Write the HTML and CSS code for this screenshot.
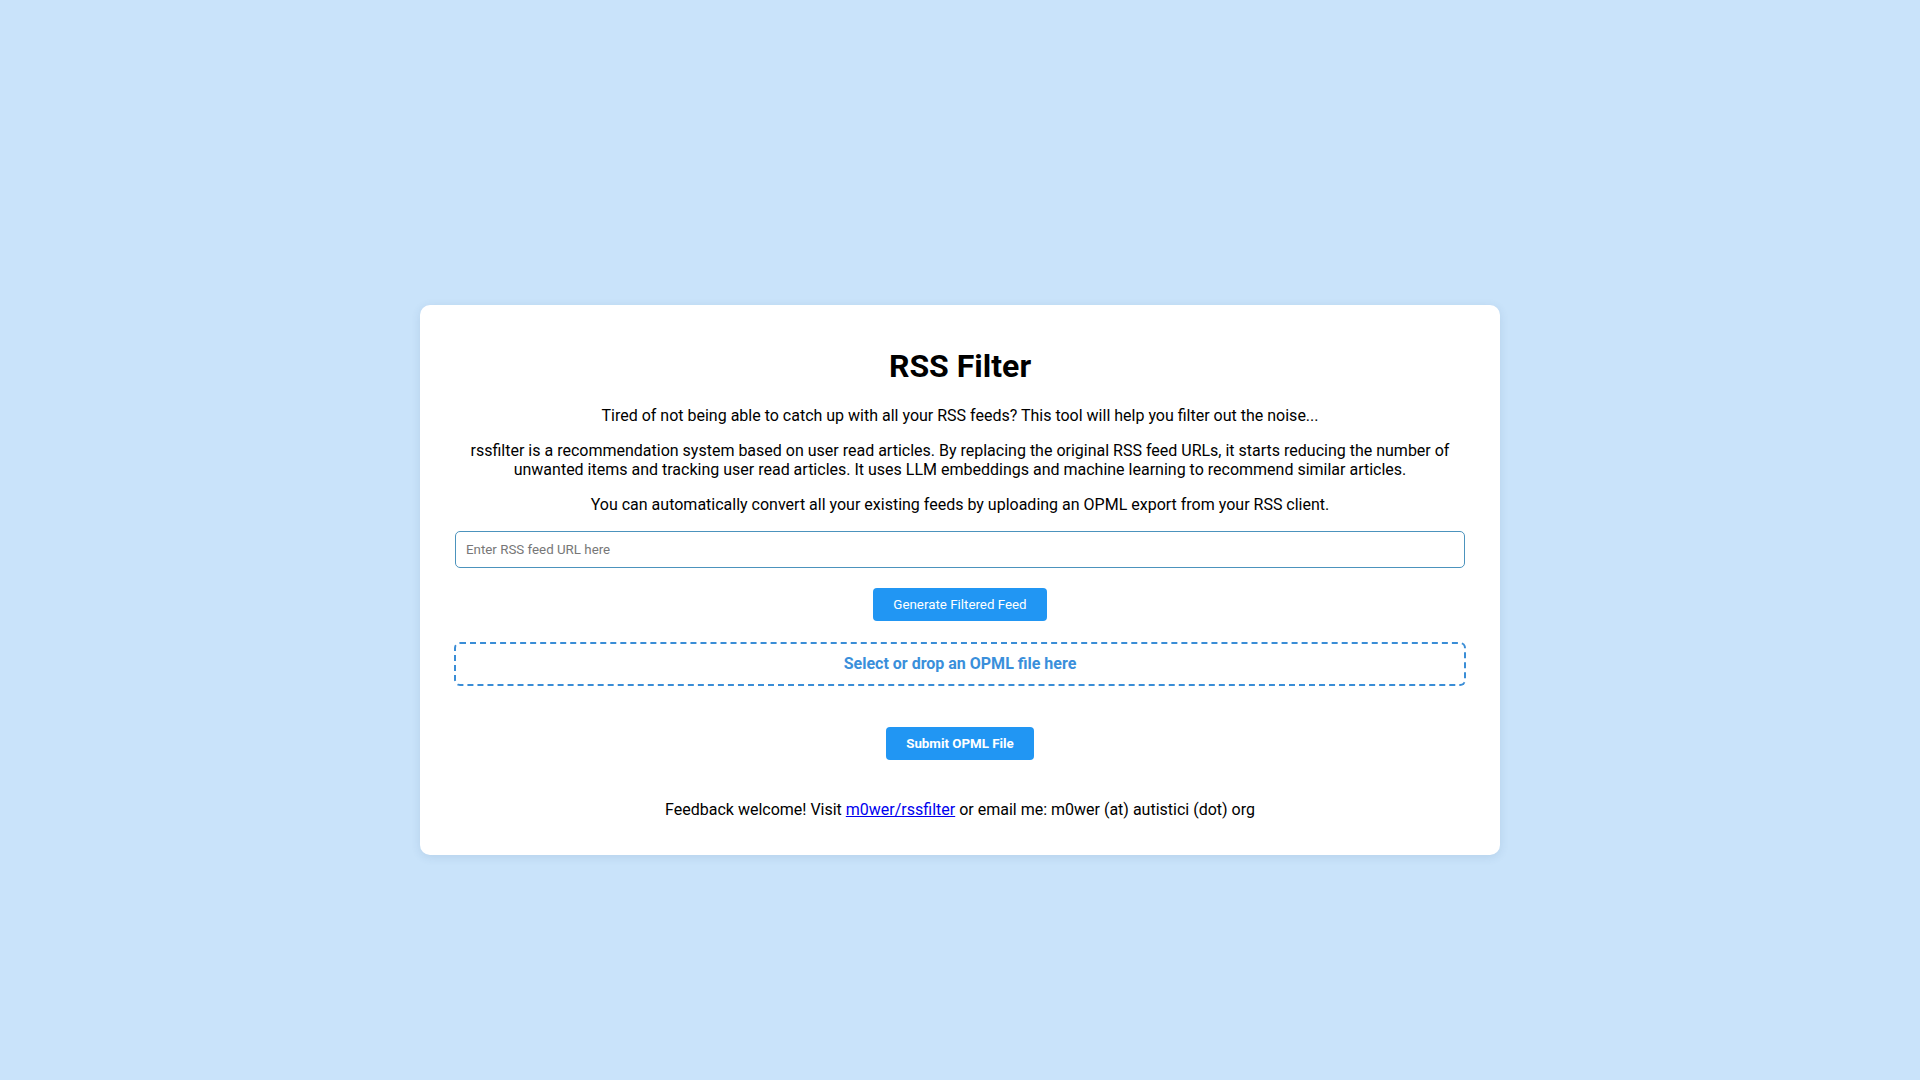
FILE: index.html
```html
<!DOCTYPE html>
<html lang="en">
<head>
<meta charset="utf-8">
<title>RSS Filter</title>
<link rel="stylesheet" href="styles.css">
</head>
<body>
<main class="card">
  <h1 class="title">RSS Filter</h1>
  <p class="text">Tired of not being able to catch up with all your RSS feeds? This tool will help you filter out the noise...</p>
  <p class="text">rssfilter is a recommendation system based on user read articles. By replacing the original RSS feed URLs, it starts reducing the number of unwanted items and tracking user read articles. It uses LLM embeddings and machine learning to recommend similar articles.</p>
  <p class="text">You can automatically convert all your existing feeds by uploading an OPML export from your RSS client.</p>
  <form class="url-form">
    <input class="url-input" type="text" placeholder="Enter RSS feed URL here">
    <button class="btn" type="button">Generate Filtered Feed</button>
  </form>
  <form class="opml-form">
    <label class="drop-zone">Select or drop an OPML file here</label>
    <button class="btn btn-bold" type="button">Submit OPML File</button>
  </form>
  <p class="text footer">Feedback welcome! Visit <a class="link" href="#">m0wer/rssfilter</a> or email me: m0wer (at) autistici (dot) org</p>
</main>
</body>
</html>
```

FILE: styles.css
```css
html, body {
  margin: 0;
  padding: 0;
}

body {
  box-sizing: border-box;
  min-height: 100vh;
  padding-top: 80px;
  background: #c9e3fa;
  display: flex;
  align-items: center;
  justify-content: center;
  font-family: Roboto, "Liberation Sans", Arial, sans-serif;
  color: #000;
}

.card {
  box-sizing: border-box;
  width: 1080px;
  padding: 21px 35px 20px;
  background: #fff;
  border-radius: 10px;
  box-shadow: 0 2px 10px rgba(40, 80, 120, 0.12);
  text-align: center;
}

.title {
  font-size: 32px;
  font-weight: 700;
  margin: 21px 0;
}

.text {
  font-size: 16px;
  margin: 16px 0;
}

.url-form {
  margin-top: 17px;
  display: flex;
  flex-direction: column;
  align-items: center;
  gap: 20px;
}

.url-input {
  box-sizing: border-box;
  width: 100%;
  height: 37px;
  padding: 10px;
  font-family: Roboto, "Liberation Sans", Arial, sans-serif;
  font-size: 13.33px;
  border: 1px solid #4c93bd;
  border-radius: 5px;
  outline: none;
  color: #000;
}

.url-input::placeholder {
  color: #777;
}

.opml-form {
  margin-top: 21px;
  display: flex;
  flex-direction: column;
  align-items: center;
  gap: 41px;
}

.drop-zone {
  box-sizing: border-box;
  display: block;
  width: calc(100% + 2px);
  padding: 10px 9px 11px;
  border: 2px dashed #3a8dd6;
  border-radius: 6px;
  color: #3a8fdb;
  font-size: 16px;
  font-weight: 700;
  cursor: pointer;
}

.btn {
  background: #2196f3;
  color: #fff;
  border: none;
  border-radius: 4px;
  padding: 9px 20px;
  font-family: Roboto, "Liberation Sans", Arial, sans-serif;
  font-size: 13.33px;
  font-weight: 400;
  cursor: pointer;
}

.btn-bold {
  font-weight: 700;
}

.footer {
  margin-top: 40px;
}

.link {
  color: #0000ee;
}
```
